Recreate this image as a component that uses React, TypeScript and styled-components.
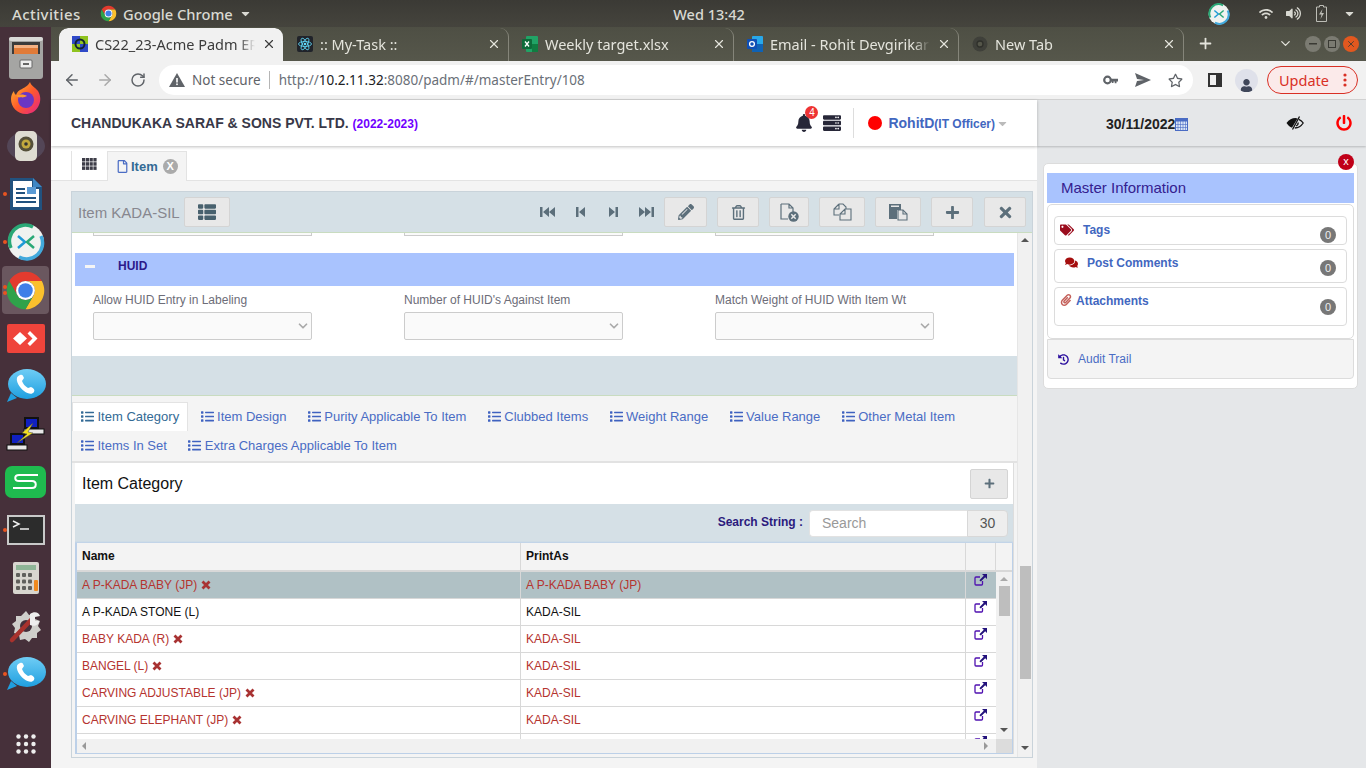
import { ReactNode } from "react";
import styled, { createGlobalStyle } from "styled-components";
import {
  FaBell,
  FaCaretDown,
  FaComments,
  FaHistory,
  FaList,
  FaPaperclip,
  FaPencilAlt,
  FaPlus,
  FaPowerOff,
  FaRegFile,
  FaRegStar,
  FaRegTrashAlt,
  FaServer,
  FaTags,
  FaThList,
  FaTimes,
  FaUser,
  FaVolumeUp,
  FaWifi,
} from "react-icons/fa";
import { ArrowLeft, ArrowRight, ChevronDown, Plus, RotateCw, X } from "lucide-react";

const GlobalStyle = createGlobalStyle`
  html, body {
    margin: 0;
    padding: 0;
    overflow: hidden;
    background: #f4f4f4;
  }
  * {
    box-sizing: border-box;
  }
`;

const uiFont = `"Liberation Sans", Arial, sans-serif`;
const desktopFont = `"Noto Sans", "Open Sans", sans-serif`;

/* ---------- drawn logos ---------- */

function ChromeLogo({ size }: { size: number }) {
  return (
    <svg width={size} height={size} viewBox="0 0 48 48">
      <path d="M43.050 13H24A11 11 0 0 0 14.470 29.500L4.950 13A22 22 0 0 1 43.050 13z" fill="#e33b2e" />
      <path d="M24 46L33.530 29.500A11 11 0 0 0 24 13H43.050A22 22 0 0 1 24 46z" fill="#fbc02d" />
      <path d="M4.950 13L14.470 29.500A11 11 0 0 0 33.530 29.500L24 46A22 22 0 0 1 4.950 13z" fill="#2fa24a" />
      <circle cx="24" cy="24" r="11" fill="#fff" />
      <circle cx="24" cy="24" r="8.500" fill="#3f7fe8" />
    </svg>
  );
}

function FileCabinet() {
  return (
    <svg width="36" height="44" viewBox="0 0 36 44">
      <rect x="1" y="1" width="34" height="42" rx="3" fill="#a5a5a3" />
      <rect x="1" y="1" width="34" height="4" rx="2" fill="#d9d9d7" />
      <rect x="4" y="6" width="28" height="12" fill="#3b3b3b" />
      <rect x="6" y="9" width="24" height="3" fill="#f4b183" />
      <rect x="6" y="12" width="24" height="6" fill="#e07b39" />
      <rect x="12" y="24" width="12" height="8" rx="1" fill="#eee" stroke="#666" />
      <rect x="15" y="27" width="6" height="2" fill="#666" />
    </svg>
  );
}

function Firefox() {
  return (
    <svg width="32" height="34" viewBox="0 0 32 34">
      <defs>
        <linearGradient id="ffx" x1="0" y1="0" x2="1" y2="1">
          <stop offset="0" stopColor="#ffc02e" />
          <stop offset="0.5" stopColor="#ff5a2b" />
          <stop offset="1" stopColor="#e3218b" />
        </linearGradient>
      </defs>
      <path d="M20 1c1 4 5 5 8 9 3 5 3 11 0 16-3 5-8 7-12 7C7 33 1 26 1 18c0-3 1-6 3-8 0 2 1 3 2 4 1-3 3-5 6-6 3-2 6-3 8-7z" fill="url(#ffx)" />
      <circle cx="16" cy="19" r="8" fill="#6b36c4" />
      <path d="M6 15c3-2 8-2 11 0-2 1-5 2-6 1-1 1-3 0-5-1z" fill="#ff9a2e" />
    </svg>
  );
}

function Speaker() {
  return (
    <svg width="40" height="36" viewBox="0 0 40 36">
      <ellipse cx="20" cy="18" rx="19" ry="14" fill="#5e5a70" opacity="0.55" />
      <rect x="9" y="3" width="22" height="30" rx="5" fill="#dedcd2" />
      <circle cx="20" cy="16" r="7.500" fill="#55503a" />
      <circle cx="20" cy="16" r="4.500" fill="#c2a93e" />
      <circle cx="20" cy="16" r="1.800" fill="#333" />
    </svg>
  );
}

function Writer() {
  return (
    <svg width="34" height="34" viewBox="0 0 34 34">
      <path d="M1 1h23l9 9v23H1z" fill="#21527f" />
      <path d="M4 4h19v8h7v18H4z" fill="#fff" />
      <path d="M24 1l9 9h-9z" fill="#3f87c4" />
      <rect x="7" y="11" width="9" height="2" fill="#21527f" />
      <rect x="7" y="15" width="9" height="2" fill="#21527f" />
      <rect x="18" y="10" width="9" height="7" fill="#5b9bd5" />
      <rect x="7" y="20" width="20" height="2" fill="#21527f" />
      <rect x="7" y="24" width="20" height="2" fill="#21527f" />
    </svg>
  );
}

function RemoteRing({ size }: { size: number }) {
  return (
    <svg width={size} height={size} viewBox="0 0 38 38">
      <circle cx="19" cy="19" r="18" fill="#f0f2f0" />
      <path d="M4 25A16 16 0 0 1 26 4" fill="none" stroke="#2aa876" strokeWidth="3.500" />
      <path d="M34 13A16 16 0 0 1 12 34" fill="none" stroke="#41a9dc" strokeWidth="3.500" />
      <path d="M11 13l7 6-7 6" fill="none" stroke="#1f9ad6" strokeWidth="2.500" />
      <path d="M27 13l-7 6 7 6" fill="none" stroke="#2aa876" strokeWidth="2.500" />
    </svg>
  );
}

function RedDesk() {
  return (
    <svg width="38" height="29" viewBox="0 0 38 29">
      <rect width="38" height="29" rx="2" fill="#ef443b" />
      <path d="M13 8l7 6.500-7 6.500-7-6.500z" fill="#fff" />
      <path d="M23 7l7.500 7.500L23 22l-2.500-2.500 5-5-5-5z" fill="#fff" />
    </svg>
  );
}

function PhoneBubble() {
  return (
    <svg width="40" height="34" viewBox="0 0 40 34">
      <defs>
        <linearGradient id="pb" x1="0" y1="0" x2="0" y2="1">
          <stop offset="0" stopColor="#6fcdf5" />
          <stop offset="1" stopColor="#1f9fe0" />
        </linearGradient>
      </defs>
      <ellipse cx="21" cy="15" rx="19" ry="15" fill="url(#pb)" />
      <path d="M5 24L1 33l10-4z" fill="#1f9fe0" />
      <path d="M14 6c2-1 3 0 4 3l-2 3c1 3 3 5 6 7l3-1c3 1 4 3 3 5-2 3-6 2-10-1-5-4-8-10-7-13 0-1 1-2 3-3z" fill="#fff" />
    </svg>
  );
}

function NetworkLink() {
  return (
    <svg width="40" height="36" viewBox="0 0 40 36">
      <rect x="18" y="1" width="15" height="12" fill="#111" />
      <rect x="20" y="3" width="11" height="8" fill="#1020c0" />
      <rect x="18" y="13" width="20" height="5" fill="#e8e8e8" stroke="#111" />
      <rect x="4" y="17" width="15" height="12" fill="#111" />
      <rect x="6" y="19" width="11" height="8" fill="#1020c0" />
      <rect x="1" y="29" width="20" height="5" fill="#e8e8e8" stroke="#111" />
      <path d="M27 7L16 17l5 1-10 9 16-10-5-1z" fill="#f5e020" stroke="#444" strokeWidth="0.500" />
    </svg>
  );
}

function WpsSheet() {
  return (
    <svg width="41" height="32" viewBox="0 0 41 32">
      <rect width="41" height="32" rx="7" fill="#1fbb4f" />
      <path d="M33 9H14c-5 0-5 6 0 6h13c5 0 5 7 0 7H8" fill="none" stroke="#fff" strokeWidth="2" />
    </svg>
  );
}

function Terminal() {
  return (
    <svg width="38" height="30" viewBox="0 0 38 30">
      <rect width="38" height="30" fill="#c9c9c9" />
      <rect x="2" y="2" width="34" height="26" fill="#2c2c2c" />
      <path d="M6 6l6 3-6 3" fill="none" stroke="#eee" strokeWidth="1.500" />
      <path d="M13 14h9" stroke="#eee" strokeWidth="1.500" />
    </svg>
  );
}

function Calculator() {
  const keys = [0, 1, 2];
  return (
    <svg width="26" height="32" viewBox="0 0 26 32">
      <rect width="26" height="32" rx="2" fill="#d8d6cf" />
      <rect x="3" y="3" width="20" height="5" fill="#8eb596" />
      {keys.map((r) =>
        keys.map((c) => <rect key={`${r}${c}`} x={3 + c * 6} y={11 + r * 6.500} width="4" height="4" rx="1" fill="#60605c" />),
      )}
      <rect x="21" y="18" width="4" height="11" rx="1" fill="#ef8a1f" />
    </svg>
  );
}

function ToolsGear() {
  return (
    <svg width="36" height="36" viewBox="0 0 36 36">
      <path d="M18 3l3 4 5-1 1 5 5 2-2 5 3 4-4 3 0 5-5 0-3 4-4-3-5 1-1-5-5-2 1-5-3-4 4-3 0-5 5 0z" fill="#cfcfcb" />
      <circle cx="18" cy="18" r="6" fill="#45303a" />
      <path d="M4 32L24 11" stroke="#a8322d" strokeWidth="4.500" strokeLinecap="round" />
      <path d="M22 6c4-3 9-2 10 2l-5 1 0 4 4 0c0 4-5 6-9 4z" fill="#eee" />
    </svg>
  );
}

function AppGrid() {
  const dots = [0, 1, 2];
  return (
    <svg width="20" height="20" viewBox="0 0 20 20">
      {dots.map((r) =>
        dots.map((c) => <circle key={`${r}${c}`} cx={2.500 + c * 7.500} cy={2.500 + r * 7.500} r="2.200" fill="#eee" />),
      )}
    </svg>
  );
}

function TabFavicon({ kind }: { kind: string }) {
  if (kind === "erp") {
    return (
      <svg width="16" height="16" viewBox="0 0 16 16">
        <rect width="16" height="16" fill="#2f49c8" />
        <path d="M8 0h8v8H8z" fill="#8fc31f" />
        <path d="M0 8h8v8H0z" fill="#8fc31f" />
        <circle cx="8" cy="8" r="4.500" fill="none" stroke="#123" strokeWidth="2" />
      </svg>
    );
  }
  if (kind === "react") {
    return (
      <svg width="16" height="16" viewBox="0 0 16 16">
        <rect width="16" height="16" rx="2" fill="#20232a" />
        <g fill="none" stroke="#61dafb" strokeWidth="0.800">
          <ellipse cx="8" cy="8" rx="6.500" ry="2.500" />
          <ellipse cx="8" cy="8" rx="6.500" ry="2.500" transform="rotate(60 8 8)" />
          <ellipse cx="8" cy="8" rx="6.500" ry="2.500" transform="rotate(120 8 8)" />
        </g>
        <circle cx="8" cy="8" r="1.300" fill="#61dafb" />
      </svg>
    );
  }
  if (kind === "excel") {
    return (
      <svg width="16" height="16" viewBox="0 0 16 16">
        <rect x="4" y="0" width="12" height="16" rx="1" fill="#21a366" />
        <rect x="10" y="8" width="6" height="8" fill="#107c41" />
        <rect x="0" y="3" width="10" height="10" rx="1" fill="#0e6b3a" />
        <path d="M3 5.500l4 5M7 5.500l-4 5" stroke="#fff" strokeWidth="1.300" />
      </svg>
    );
  }
  if (kind === "outlook") {
    return (
      <svg width="16" height="16" viewBox="0 0 16 16">
        <rect x="5" y="0" width="11" height="16" rx="1" fill="#28a8ea" />
        <rect x="5" y="8" width="11" height="8" fill="#0f62b5" />
        <rect x="0" y="3" width="10" height="10" rx="1" fill="#0f4fb5" />
        <circle cx="5" cy="8" r="2.400" fill="none" stroke="#fff" strokeWidth="1.300" />
      </svg>
    );
  }
  return (
    <svg width="16" height="16" viewBox="0 0 16 16">
      <circle cx="8" cy="8" r="7.500" fill="#3f403a" />
      <circle cx="8" cy="8" r="3" fill="#55564a" stroke="#2f302b" strokeWidth="1.300" />
    </svg>
  );
}

/* ---------- small toolbar icons ---------- */

function NavIcon({ kind }: { kind: "first" | "prev" | "next" | "last" }) {
  const paths = {
    first: "M0 1h2.500v10H0zM3 6l6-5v10zM9 6l6-5v10z",
    prev: "M0 1h2.500v10H0zM3 6l6-5v10z",
    next: "M0 1l6 5-6 5zM6.500 1H9v10H6.500z",
    last: "M0 1l6 5-6 5zM6 1l6 5-6 5zM12.500 1H15v10h-2.500z",
  };
  const wide = kind === "first" || kind === "last";
  return (
    <svg width={wide ? 15 : 9} height="12" viewBox={wide ? "0 0 15 12" : "0 0 9 12"}>
      <path d={paths[kind]} fill="#5c6f7b" />
    </svg>
  );
}

function FileCancelIcon() {
  return (
    <svg width="19" height="19" viewBox="0 0 19 19">
      <path d="M1 1h8l4 4v5M1 1v15h7M9 1v4h4" fill="none" stroke="#5c6f7b" strokeWidth="1.200" />
      <circle cx="13.500" cy="13.500" r="5.200" fill="#5c6f7b" />
      <path d="M11.300 11.300l4.400 4.400M15.700 11.300l-4.400 4.400" stroke="#e8e8e8" strokeWidth="1.500" />
    </svg>
  );
}

function CopyIcon() {
  return (
    <svg width="19" height="18" viewBox="0 0 19 18">
      <path d="M6 1h4l3 3v2M6 1L1 6v6h5M6 1v5H1" fill="none" stroke="#5c6f7b" strokeWidth="1.100" />
      <path d="M12 6h6v11H7V11zM12 6v5H7" fill="none" stroke="#5c6f7b" strokeWidth="1.100" />
    </svg>
  );
}

function PasteIcon() {
  return (
    <svg width="19" height="18" viewBox="0 0 19 18">
      <path d="M0 1h12v6H8v9H0z" fill="#5c6f7b" />
      <rect x="2" y="2.500" width="8" height="1.500" fill="#e8e8e8" />
      <path d="M9 7h5l4 4v6H9z" fill="#e8e8e8" stroke="#5c6f7b" strokeWidth="1.100" />
      <path d="M14 7v4h4" fill="none" stroke="#5c6f7b" strokeWidth="1.100" />
    </svg>
  );
}

function CalendarIcon() {
  const cols = [0, 1, 2, 3];
  return (
    <svg width="13" height="14" viewBox="0 0 13 14">
      <rect x="0.500" y="1.500" width="12" height="12" fill="#dbe6f7" stroke="#4a6cc4" />
      <rect x="0.500" y="1.500" width="12" height="3" fill="#4a6cc4" />
      {cols.map((c) => (
        <path key={c} d={`M${3 + c * 2.500} 4v9.500`} stroke="#4a6cc4" strokeWidth="0.600" />
      ))}
      <path d="M0 7.500h13M0 10.500h13" stroke="#4a6cc4" strokeWidth="0.600" />
    </svg>
  );
}

function OpenLinkIcon() {
  return (
    <svg width="13" height="12" viewBox="0 0 13 12">
      <path d="M8.500 7v3a1 1 0 0 1-1 1H2a1 1 0 0 1-1-1V4a1 1 0 0 1 1-1h4" fill="none" stroke="#4f10b0" strokeWidth="1.300" />
      <path d="M8 0h5v5l-1.800-1.800-4.400 4.400-1.400-1.400 4.400-4.400z" fill="#23127c" />
    </svg>
  );
}

function GridIcon() {
  const cols = [0, 1, 2, 3];
  const rows = [0, 1, 2];
  return (
    <svg width="15" height="12" viewBox="0 0 15 12">
      {rows.map((r) => cols.map((c) => <rect key={`${r}${c}`} x={c * 3.800} y={r * 4.200} width="3.200" height="3.500" fill="#3d3d48" />))}
    </svg>
  );
}

function RemoveMark() {
  return (
    <svg width="10" height="10" viewBox="0 0 10 10">
      <path d="M1.500 1.500l7 7M8.500 1.500l-7 7" fill="none" stroke="#a83232" strokeWidth="2.800" />
    </svg>
  );
}

function KeyIcon() {
  return (
    <svg width="15" height="10" viewBox="0 0 15 10">
      <circle cx="4.500" cy="5" r="3.300" fill="none" stroke="#5f6368" strokeWidth="2.200" />
      <path d="M8 3.800h7v2.700h-1.500v1.800h-1.800V6.500h-1.200v1.500H8.800V6.500H8z" fill="#5f6368" />
    </svg>
  );
}

function BatteryIcon() {
  return (
    <svg width="11" height="17" viewBox="0 0 11 17">
      <path d="M3.500 0.500h4v1.500h3v14.500H.500V2h3z" fill="none" stroke="#bdbdb6" />
      <path d="M6.500 4L3 9.500h2.500L4.500 14 8 8H5.500z" fill="#bdbdb6" />
    </svg>
  );
}

function KebabDots() {
  return (
    <svg width="4" height="14" viewBox="0 0 4 14">
      <circle cx="2" cy="2" r="1.600" fill="#d93025" />
      <circle cx="2" cy="7" r="1.600" fill="#d93025" />
      <circle cx="2" cy="12" r="1.600" fill="#d93025" />
    </svg>
  );
}

function HiddenEye() {
  return (
    <svg width="18" height="14" viewBox="0 0 18 14">
      <path d="M0.500 7C3 3.500 6 2 9.500 2L11.500 2.400 6 11.800C3.800 11 2 9.300 0.500 7z" fill="#111" />
      <path d="M13.500 0.500L6.500 13.500" stroke="#111" strokeWidth="1.300" />
      <path d="M12.800 3.300C14.600 4.200 16.200 5.400 17.200 7 15.200 10 12.200 11.900 8.800 12" fill="none" stroke="#111" strokeWidth="1.300" />
      <path d="M12 6.500C12.300 8 11.500 9.500 10 10" fill="none" stroke="#111" strokeWidth="1.300" />
    </svg>
  );
}

/* ---------- desktop shell ---------- */

const Screen = styled.div`
  width: 1366px;
  height: 768px;
  display: flex;
  flex-direction: column;
  overflow: hidden;
  font-family: ${uiFont};
`;

const TopBar = styled.div`
  height: 27px;
  flex: none;
  display: flex;
  align-items: center;
  background: linear-gradient(#3b3a35, #45443d);
  color: #d9d9d2;
  font-family: ${desktopFont};
  font-size: 15px;
  font-weight: 500;
`;

const Activities = styled.span`
  margin-left: 12px;
  width: 88px;
  letter-spacing: 0.400px;
`;

const AppMenu = styled.div`
  display: flex;
  align-items: center;
  gap: 6px;
  width: 573px;
  font-size: 14.700px;
`;

const Clock = styled.span`
  width: 72px;
  white-space: nowrap;
  font-size: 14.500px;
  text-align: center;
`;

const Tray = styled.div`
  margin-left: auto;
  display: flex;
  align-items: center;
  gap: 15px;
  padding-right: 10px;
`;

const TrayWifi = styled(FaWifi)`
  margin: 0 -2px 0 14px;
`;

const TrayCaret = styled(FaCaretDown)`
  margin-left: 1px;
`;

const Desktop = styled.div`
  flex: 1;
  min-height: 0;
  display: flex;
`;

const Dock = styled.div`
  width: 51px;
  flex: none;
  display: flex;
  flex-direction: column;
  padding-top: 11px;
  background: #46303a;
`;

const DockSlot = styled.div<{ $h?: number; $active?: boolean; $end?: boolean; $mb?: number }>`
  position: relative;
  flex: none;
  height: ${(p) => p.$h ?? 48}px;
  margin: ${(p) => (p.$end ? "auto" : "0")} 2px ${(p) => p.$mb ?? 0}px;
  display: flex;
  align-items: center;
  justify-content: center;
  border-radius: 4px;
  background: ${(p) => (p.$active ? "#6a575f" : "transparent")};
`;

const DockDots = styled.span`
  position: absolute;
  left: 0;
  top: 50%;
  transform: translateY(-50%);
  display: flex;
  flex-direction: column;
  gap: 2px;
`;

const DockDot = styled.i`
  display: block;
  width: 4px;
  height: 4px;
  margin-left: 1px;
  border-radius: 50%;
  background: #e95420;
`;

const Browser = styled.div`
  flex: 1;
  min-width: 0;
  display: flex;
  flex-direction: column;
`;

const TabStrip = styled.div`
  height: 34px;
  flex: none;
  display: flex;
  align-items: flex-end;
  padding-left: 8px;
  background: linear-gradient(#4e4f44, #56574b);
  color: #e4e4dc;
  font-family: ${desktopFont};
  font-size: 14.500px;
`;

const BrowserTab = styled.div<{ $active?: boolean; $sep?: boolean }>`
  width: 225px;
  height: 33px;
  flex: none;
  display: flex;
  align-items: center;
  gap: 7px;
  padding: 0 7px 2px 13px;
  border-radius: 9px 9px 0 0;
  background: ${(p) => (p.$active ? "#f1f1f1" : "transparent")};
  color: ${(p) => (p.$active ? "#3c3c3c" : "#e4e4dc")};
  border-right: 1px solid ${(p) => (p.$sep ? "#85857a" : "transparent")};
  background-clip: padding-box;
`;

const TabTitle = styled.span`
  flex: 1;
  min-width: 0;
  white-space: nowrap;
  -webkit-mask-image: linear-gradient(to right, #000 90%, transparent 100%);
  mask-image: linear-gradient(to right, #000 90%, transparent 100%);
`;

const StripEnd = styled.div`
  flex: 1;
  height: 33px;
  display: flex;
  align-items: center;
  padding: 0 0 2px 13px;
`;

const WindowButtons = styled.div`
  margin-left: auto;
  display: flex;
  align-items: center;
  gap: 3px;
  padding-right: 7px;
`;

const StripChevron = styled(ChevronDown)`
  margin-right: 9px;
`;

const WindowButton = styled.span<{ $close?: boolean }>`
  width: 16px;
  height: 16px;
  border-radius: 50%;
  display: flex;
  align-items: center;
  justify-content: center;
  background: ${(p) => (p.$close ? "#e2581f" : "#7b7b72")};
  color: #3a3a34;
`;

const UrlBar = styled.div`
  height: 39px;
  flex: none;
  display: flex;
  align-items: center;
  background: #f1f1f1;
  border-bottom: 1px solid #d4d4d4;
  color: #5f6368;
`;

const NavButton = styled.span<{ $w: number }>`
  width: ${(p) => p.$w}px;
  flex: none;
  display: flex;
  align-items: center;
  justify-content: center;
`;

const Omnibox = styled.div`
  width: 1034px;
  height: 30px;
  flex: none;
  display: flex;
  align-items: center;
  padding-left: 10px;
  border-radius: 15px;
  background: #fff;
  font-family: ${desktopFont};
  font-size: 13.500px;
`;

const SecurityText = styled.span`
  margin-left: 7px;
  color: #5f6368;
  white-space: nowrap;
  padding-right: 8px;
  border-right: 1px solid #b5b5b5;
  line-height: 18px;
`;

const UrlText = styled.span`
  margin-left: 9px;
  color: #6a7078;
  white-space: nowrap;
  b {
    font-weight: 400;
    color: #202124;
  }
`;

const OmniIcons = styled.div`
  margin-left: auto;
  display: flex;
  align-items: center;
  gap: 17px;
  padding-right: 10px;
  color: #5f6368;
`;

const AvatarCircle = styled.span`
  width: 23px;
  height: 23px;
  flex: none;
  border-radius: 50%;
  background: #dfe1ea;
  display: flex;
  align-items: flex-end;
  justify-content: center;
  overflow: hidden;
  color: #40475a;
`;

const SideToggle = styled.span`
  display: block;
  width: 14px;
  height: 14px;
  margin: 0 13px 0 15px;
  border: 2px solid #333;
  border-right-width: 6px;
`;

const UpdatePill = styled.span`
  width: 91px;
  height: 28px;
  flex: none;
  margin-left: 9px;
  display: flex;
  align-items: center;
  padding-left: 11px;
  border: 1px solid #d93025;
  border-radius: 14px;
  background: #fbeaea;
  color: #d93025;
  font-family: ${desktopFont};
  font-size: 14.500px;
`;

const KebabSlot = styled.span`
  margin-left: auto;
  margin-right: 10px;
  display: flex;
`;

/* ---------- erp page ---------- */

const Page = styled.div`
  flex: 1;
  min-height: 0;
  display: flex;
`;

const MainColumn = styled.div`
  width: 986px;
  flex: none;
  display: flex;
  flex-direction: column;
  background: #f4f4f4;
`;

const PageHeader = styled.header`
  height: 46px;
  flex: none;
  display: flex;
  align-items: center;
  padding: 0 28px 0 20px;
  background: #fff;
  box-shadow: 0 1px 3px rgba(0, 0, 0, 0.25);
  position: relative;
`;

const CompanyName = styled.h1`
  margin: 0;
  font-size: 14px;
  font-weight: 700;
  color: #383848;
  white-space: nowrap;
`;

const YearTag = styled.span`
  font-size: 12px;
  color: #7000ff;
`;

const HeaderTools = styled.div`
  margin-left: auto;
  display: flex;
  align-items: center;
  color: #272738;
`;

const BellWrap = styled.span`
  position: relative;
  display: flex;
  margin-right: 10px;
`;

const BellBadge = styled.span`
  position: absolute;
  top: -8px;
  right: -5px;
  width: 13px;
  height: 13px;
  border-radius: 50%;
  background: #ee3333;
  color: #fff;
  font-size: 10px;
  line-height: 13px;
  text-align: center;
`;

const ToolDivider = styled.span`
  width: 1px;
  height: 30px;
  margin: 0 14px 0 12px;
  background: #ddd;
`;

const StatusDot = styled.span`
  width: 14px;
  height: 14px;
  margin-right: 6px;
  border-radius: 50%;
  background: #ff0000;
`;

const UserName = styled.span`
  display: flex;
  align-items: baseline;
  font-size: 14px;
  font-weight: 700;
  color: #4267c0;
  small {
    font-size: 12px;
  }
`;

const UserCaret = styled(FaCaretDown)`
  margin-left: 1px;
  color: #bbb;
`;

const PageTabs = styled.div`
  height: 35px;
  flex: none;
  display: flex;
  align-items: flex-end;
  padding-left: 20px;
  background: #fff;
  border-bottom: 1px solid #e3e3e3;
`;

const GridTab = styled.div`
  width: 36px;
  height: 29px;
  display: flex;
  justify-content: center;
  padding-top: 7px;
  border-left: 1px solid #e3e3e3;
`;

const DocTab = styled.div`
  height: 30px;
  width: 80px;
  display: flex;
  align-items: center;
  gap: 2px;
  padding-left: 8px;
  margin-bottom: -1px;
  background: #f4f4f4;
  border: 1px solid #e3e3e3;
  border-bottom: none;
  color: #336a95;
  font-size: 13px;
  font-weight: 700;
`;

const TabCloseCircle = styled.span`
  width: 15px;
  height: 15px;
  margin-left: 3px;
  border-radius: 50%;
  background: #aaa;
  color: #fff;
  font-size: 11px;
  line-height: 15px;
  text-align: center;
`;

const WorkArea = styled.div`
  flex: 1;
  min-height: 0;
  display: flex;
  padding: 10px 4px 10px 20px;
`;

const Panel = styled.section`
  flex: 1;
  min-width: 0;
  display: flex;
  flex-direction: column;
  border: 1px solid #c9d3da;
`;

const PanelHead = styled.div`
  height: 41px;
  flex: none;
  display: flex;
  align-items: center;
  padding: 0 6px 0 6px;
  background: #d5e0e6;
  border-bottom: 1px solid #c9dcc0;
`;

const PanelTitle = styled.span`
  font-size: 15px;
  color: #87878f;
  margin-right: 4px;
`;

const ActionButton = styled.span<{ $w: number; $ml?: number }>`
  width: ${(p) => p.$w}px;
  height: 30px;
  flex: none;
  margin-left: ${(p) => p.$ml ?? 10}px;
  display: flex;
  align-items: center;
  justify-content: center;
  background: #e8e8e8;
  border: 1px solid #d4d4d4;
  border-radius: 2px;
  color: #5c6f7b;
`;

const NavGroup = styled.div`
  margin-left: auto;
  display: flex;
  align-items: center;
  margin-right: 1px;
`;

const NavSlot = styled.span<{ $w: number }>`
  width: ${(p) => p.$w}px;
  display: flex;
  justify-content: center;
`;

const PanelBody = styled.div`
  flex: 1;
  min-height: 0;
  display: flex;
`;

const Scroller = styled.div`
  flex: 1;
  min-width: 0;
  display: flex;
  flex-direction: column;
  background: #f4f4f4;
`;

const PageScrollbar = styled.div`
  width: 15px;
  flex: none;
  display: flex;
  flex-direction: column;
  align-items: center;
  background: #f1f1f1;
  border-left: 1px solid #e6e6e6;
`;

const ArrowUp = styled.span<{ $c?: string }>`
  display: block;
  width: 0;
  height: 0;
  margin-top: 5px;
  border-left: 4px solid transparent;
  border-right: 4px solid transparent;
  border-bottom: 4px solid ${(p) => p.$c ?? "#555"};
`;

const ArrowDown = styled.span`
  display: block;
  width: 0;
  height: 0;
  margin-top: auto;
  margin-bottom: 7px;
  border-left: 4px solid transparent;
  border-right: 4px solid transparent;
  border-top: 4px solid #555;
`;

const PageThumb = styled.span`
  display: block;
  width: 11px;
  height: 113px;
  margin-top: 324px;
  background: #bebebe;
`;

const WhiteBlock = styled.div`
  height: 123px;
  flex: none;
  background: #fff;
`;

const CutInputs = styled.div`
  height: 20px;
  display: grid;
  grid-template-columns: repeat(3, 219px);
  column-gap: 92px;
  padding-left: 21px;
`;

const CutInput = styled.span`
  display: block;
  height: 3px;
  border: 1px solid #ccc;
  border-top: none;
  background: #fafafa;
`;

const SectionBar = styled.div`
  height: 33px;
  margin: 0 3px;
  display: flex;
  align-items: center;
  padding-bottom: 8px;
  background: #a9c3fe;
  color: #2d1a8a;
  font-size: 12px;
  font-weight: 700;
`;

const CollapseDash = styled.span`
  width: 10px;
  height: 3px;
  margin: 1px 23px 0 10px;
  background: #f5f5f5;
`;

const FieldRow = styled.div`
  display: grid;
  grid-template-columns: repeat(3, 219px);
  column-gap: 92px;
  padding: 7px 0 0 21px;
`;

const Field = styled.label`
  display: flex;
  flex-direction: column;
  gap: 5px;
  font-size: 12px;
  color: #6d6d78;
`;

const SelectBox = styled.span`
  height: 28px;
  display: flex;
  align-items: center;
  justify-content: flex-end;
  padding-right: 1px;
  background: #fafafa;
  border: 1px solid #ccc;
  border-radius: 2px;
  color: #aaa;
`;

const GreyBand = styled.div`
  height: 40px;
  flex: none;
  background: #d5e0e6;
  border-bottom: 1px solid #c9dcc0;
`;

const ChildTabs = styled.div`
  flex: none;
  display: flex;
  flex-wrap: wrap;
  column-gap: 5.400px;
  padding: 6px 0 1px 1px;
  border-bottom: 2px solid #e2e2e2;
`;

const ChildTab = styled.div<{ $active?: boolean }>`
  height: 29px;
  display: flex;
  align-items: center;
  gap: 3.500px;
  padding: 0 8px 2px;
  color: ${(p) => (p.$active ? "#336a95" : "#4a6cc4")};
  font-size: 13px;
  background: ${(p) => (p.$active ? "#fff" : "transparent")};
  border: 1px solid ${(p) => (p.$active ? "#e3e3e3" : "transparent")};
  border-bottom: none;
  margin: 0 -1px;
`;

const GridCard = styled.div`
  flex: 1;
  min-height: 0;
  margin: 0 3px 3px;
  display: flex;
  flex-direction: column;
  border-right: 1px solid #ddd;
`;

const CardHead = styled.div`
  height: 41px;
  flex: none;
  display: flex;
  align-items: center;
  justify-content: space-between;
  padding: 0 5px 0 7px;
  background: #fff;
  font-size: 16px;
  color: #111;
`;

const CardTitle = styled.span`
  margin-top: 1px;
`;

const SearchRow = styled.div`
  height: 39px;
  flex: none;
  display: flex;
  align-items: center;
  justify-content: flex-end;
  padding: 0 5px 1px 0;
  background: #d5e0e6;
  box-shadow: inset 0 -2px 2px -1px #bcd0e8;
`;

const SearchLabel = styled.span`
  margin: 0 6px 3px 0;
  font-size: 12px;
  font-weight: 700;
  color: #2b1a7d;
`;

const SearchInput = styled.input`
  width: 158px;
  height: 27px;
  padding: 0 12px;
  border: 1px solid #e2e2e2;
  border-right: none;
  border-radius: 4px 0 0 4px;
  background: #fff;
  font: 14px ${uiFont};
  &::placeholder {
    color: #999;
    opacity: 1;
  }
`;

const SearchCount = styled.span`
  width: 41px;
  height: 27px;
  display: flex;
  align-items: center;
  justify-content: center;
  border: 1px solid #d8d8d8;
  border-radius: 0 4px 4px 0;
  background: #eee;
  font-size: 14px;
  color: #555;
`;

const DataTable = styled.div`
  flex: 1;
  min-height: 0;
  display: flex;
  flex-direction: column;
  border: 1px solid #bcd0e8;
  border-top: none;
  border-left-width: 2px;
`;

const HeadRow = styled.div`
  height: 29px;
  flex: none;
  display: grid;
  grid-template-columns: 444px 445px 30px 1fr;
  background: #f3f3f3;
  border-bottom: 2px solid #d8d8d8;
  font-size: 12px;
  font-weight: 700;
  color: #111;
`;

const HeadCell = styled.div`
  display: flex;
  align-items: center;
  padding: 0 0 2px 5px;
  border-right: 1px solid #d8d8d8;
  &:last-child {
    border-right: none;
  }
`;

const TableMiddle = styled.div`
  flex: 1;
  min-height: 0;
  display: flex;
`;

const RowsClip = styled.div`
  width: 919px;
  flex: none;
  overflow: hidden;
`;

const DataRow = styled.div<{ $selected?: boolean; $red?: boolean }>`
  height: 27px;
  display: grid;
  grid-template-columns: 444px 445px 30px;
  border-bottom: 1px solid #d8d8d8;
  background: ${(p) => (p.$selected ? "#b0c1c5" : "#fff")};
  color: ${(p) => (p.$red ? "#b5342f" : "#111")};
  font-size: 12px;
`;

const DataCell = styled.div`
  display: flex;
  align-items: center;
  gap: 4px;
  padding-left: 5px;
  border-right: 1px solid #d8d8d8;
`;

const LinkCell = styled.div`
  display: flex;
  padding: 2px 0 0 8px;
`;

const TableVBar = styled.div`
  flex: 1;
  display: flex;
  flex-direction: column;
  align-items: center;
  background: #f1f1f1;
`;

const TableThumb = styled.span`
  display: block;
  width: 11px;
  height: 30px;
  margin-top: 5px;
  background: #bebebe;
`;

const TableHBar = styled.div`
  height: 14px;
  flex: none;
  display: flex;
  align-items: center;
  justify-content: space-between;
  padding-left: 5px;
  background: #f1f1f1;
`;

const ArrowLeftTip = styled.span`
  border-top: 4px solid transparent;
  border-bottom: 4px solid transparent;
  border-right: 4px solid #999;
`;

const HBarEnd = styled.div`
  display: flex;
  align-items: center;
  gap: 8px;
`;

const ArrowRightTip = styled.span`
  border-top: 4px solid transparent;
  border-bottom: 4px solid transparent;
  border-left: 4px solid #999;
`;

const HBarCorner = styled.span`
  display: block;
  width: 16px;
  height: 14px;
  background: #dcdcdc;
`;

/* ---------- right column ---------- */

const SideColumn = styled.aside`
  flex: 1;
  min-width: 0;
  display: flex;
  flex-direction: column;
  background: #e5e7e9;
`;

const SideHeader = styled.div`
  height: 46px;
  flex: none;
  display: flex;
  align-items: center;
  padding: 2px 14px 0 69px;
  box-shadow: 0 1px 2px rgba(0, 0, 0, 0.2);
  font-size: 14px;
  font-weight: 700;
  color: #222;
`;

const SideIcons = styled.div`
  margin-left: auto;
  display: flex;
  align-items: center;
  gap: 32px;
  margin-top: -3px;
`;

const InfoCard = styled.div`
  position: relative;
  margin: 17px 8px 0 6px;
  padding: 9px 3px 9px;
  background: #fff;
  border: 1px solid #dcdcdc;
  border-radius: 5px;
`;

const CardClose = styled.span`
  position: absolute;
  top: -10px;
  right: 3px;
  width: 16px;
  height: 16px;
  border-radius: 50%;
  background: #c00018;
  color: #fff;
  font-size: 11px;
  line-height: 15px;
  text-align: center;
`;

const InfoTitle = styled.div`
  height: 30px;
  display: flex;
  align-items: center;
  padding: 0 0 2px 14px;
  background: #a9c3fe;
  color: #34208f;
  font-size: 15px;
`;

const InfoList = styled.div`
  margin-top: 1px;
  padding: 11px 6px;
  height: 135px;
  display: flex;
  flex-direction: column;
  gap: 4px;
  border: 1px solid #dcdcdc;
  border-radius: 5px;
`;

const InfoItem = styled.div<{ $h: number; $pl: number; $gap: number }>`
  position: relative;
  height: ${(p) => p.$h}px;
  flex: none;
  display: flex;
  align-items: flex-start;
  gap: ${(p) => p.$gap}px;
  padding: 6px 0 0 ${(p) => p.$pl}px;
  border: 1px solid #dcdcdc;
  border-radius: 4px;
  color: #4267c0;
  font-size: 12px;
  font-weight: 700;
`;

const CountBadge = styled.span<{ $top: number }>`
  position: absolute;
  right: 10px;
  top: ${(p) => p.$top}px;
  width: 16px;
  height: 16px;
  border-radius: 50%;
  background: #777;
  color: #eee;
  font-size: 11px;
  font-weight: 400;
  line-height: 16px;
  text-align: center;
`;

const AuditBar = styled.div`
  height: 40px;
  display: flex;
  align-items: center;
  gap: 9px;
  padding-left: 10px;
  background: #f4f4f4;
  border: 1px solid #dcdcdc;
  border-radius: 0 0 4px 4px;
  color: #4a6cc4;
  font-size: 12px;
`;

/* ---------- data ---------- */

const dockApps: { icon: ReactNode; h?: number; mb?: number; dots?: number; active?: boolean }[] = [
  { icon: <FileCabinet />, h: 40 },
  { icon: <Firefox />, h: 40, mb: 4 },
  { icon: <Speaker /> },
  { icon: <Writer />, dots: 1 },
  { icon: <RemoteRing size={38} />, dots: 1 },
  { icon: <ChromeLogo size={41} />, dots: 2, active: true },
  { icon: <RedDesk /> },
  { icon: <PhoneBubble /> },
  { icon: <NetworkLink /> },
  { icon: <WpsSheet /> },
  { icon: <Terminal />, dots: 1 },
  { icon: <Calculator /> },
  { icon: <ToolsGear /> },
  { icon: <PhoneBubble />, dots: 1 },
];

const browserTabs = [
  { kind: "erp", title: "CS22_23-Acme Padm ER", active: true },
  { kind: "react", title: ":: My-Task ::", sep: true },
  { kind: "excel", title: "Weekly target.xlsx", sep: true },
  { kind: "outlook", title: "Email - Rohit Devgirikar", sep: true },
  { kind: "new", title: "New Tab", sep: true },
];

const huidFields = ["Allow HUID Entry in Labeling", "Number of HUID's Against Item", "Match Weight of HUID With Item Wt"];

const childTabs = [
  "Item Category",
  "Item Design",
  "Purity Applicable To Item",
  "Clubbed Items",
  "Weight Range",
  "Value Range",
  "Other Metal Item",
  "Items In Set",
  "Extra Charges Applicable To Item",
];

const categoryRows = [
  { name: "A P-KADA BABY (JP)", printAs: "A P-KADA BABY (JP)", red: true, selected: true },
  { name: "A P-KADA STONE (L)", printAs: "KADA-SIL" },
  { name: "BABY KADA (R)", printAs: "KADA-SIL", red: true },
  { name: "BANGEL (L)", printAs: "KADA-SIL", red: true },
  { name: "CARVING ADJUSTABLE (JP)", printAs: "KADA-SIL", red: true },
  { name: "CARVING ELEPHANT (JP)", printAs: "KADA-SIL", red: true },
  { name: "", printAs: "" },
];

export default function App() {
  return (
    <>
      <GlobalStyle />
      <Screen>
        <TopBar>
          <Activities>Activities</Activities>
          <AppMenu>
            <ChromeLogo size={17} />
            Google Chrome
            <FaCaretDown size={13} />
          </AppMenu>
          <Clock>Wed 13:42</Clock>
          <Tray>
            <RemoteRing size={22} />
            <TrayWifi size={14} />
            <FaVolumeUp size={15} />
            <BatteryIcon />
            <TrayCaret size={13} />
          </Tray>
        </TopBar>
        <Desktop>
          <Dock>
            {dockApps.map((app, i) => (
              <DockSlot key={i} $h={app.h} $mb={app.mb} $active={app.active}>
                {app.dots ? (
                  <DockDots>
                    {Array.from({ length: app.dots }).map((_, d) => (
                      <DockDot key={d} />
                    ))}
                  </DockDots>
                ) : null}
                {app.icon}
              </DockSlot>
            ))}
            <DockSlot $end>
              <AppGrid />
            </DockSlot>
          </Dock>
          <Browser>
            <TabStrip>
              {browserTabs.map((tab) => (
                <BrowserTab key={tab.title} $active={tab.active} $sep={tab.sep}>
                  <TabFavicon kind={tab.kind} />
                  <TabTitle>{tab.title}</TabTitle>
                  <X size={14} strokeWidth={2} />
                </BrowserTab>
              ))}
              <StripEnd>
                <Plus size={17} strokeWidth={2.5} />
                <WindowButtons>
                  <StripChevron size={15} />
                  <WindowButton>
                    <svg width="8" height="2" viewBox="0 0 8 2">
                      <rect width="8" height="1.500" fill="#3a3a34" />
                    </svg>
                  </WindowButton>
                  <WindowButton>
                    <svg width="8" height="8" viewBox="0 0 8 8">
                      <rect x="0.500" y="0.500" width="7" height="7" fill="none" stroke="#3a3a34" />
                    </svg>
                  </WindowButton>
                  <WindowButton $close>
                    <X size={10} />
                  </WindowButton>
                </WindowButtons>
              </StripEnd>
            </TabStrip>
            <UrlBar>
              <NavButton $w={42}>
                <ArrowLeft size={18} strokeWidth={2} />
              </NavButton>
              <NavButton $w={24}>
                <ArrowRight size={18} strokeWidth={2} color="#a9a9a9" />
              </NavButton>
              <NavButton $w={42}>
                <RotateCw size={16} strokeWidth={2.2} />
              </NavButton>
              <Omnibox>
                <svg width="16" height="14" viewBox="0 0 16 14">
                  <path d="M8 0l8 14H0z" fill="#5f6368" />
                  <rect x="7.200" y="5" width="1.600" height="4.500" fill="#fff" />
                  <rect x="7.200" y="10.500" width="1.600" height="1.600" fill="#fff" />
                </svg>
                <SecurityText>Not secure</SecurityText>
                <UrlText>
                  http://<b>10.2.11.32</b>:8080/padm/#/masterEntry/108
                </UrlText>
                <OmniIcons>
                  <KeyIcon />
                  <svg width="16" height="14" viewBox="0 0 16 14">
                    <path d="M0 0l16 7-16 7 2-6 7-1-7-1z" fill="#5f6368" />
                  </svg>
                  <FaRegStar size={15} />
                </OmniIcons>
              </Omnibox>
              <SideToggle />
              <AvatarCircle>
                <FaUser size={13} />
              </AvatarCircle>
              <UpdatePill>
                Update
                <KebabSlot>
                  <KebabDots />
                </KebabSlot>
              </UpdatePill>
            </UrlBar>
            <Page>
              <MainColumn>
                <PageHeader>
                  <CompanyName>
                    CHANDUKAKA SARAF &amp; SONS PVT. LTD. <YearTag>(2022-2023)</YearTag>
                  </CompanyName>
                  <HeaderTools>
                    <BellWrap>
                      <FaBell size={18} />
                      <BellBadge>4</BellBadge>
                    </BellWrap>
                    <FaServer size={18} />
                    <ToolDivider />
                    <StatusDot />
                    <UserName>
                      RohitD<small>(IT Officer)</small>
                    </UserName>
                    <UserCaret size={13} />
                  </HeaderTools>
                </PageHeader>
                <PageTabs>
                  <GridTab>
                    <GridIcon />
                  </GridTab>
                  <DocTab>
                    <FaRegFile size={13} color="#4a6cc4" />
                    Item
                    <TabCloseCircle>X</TabCloseCircle>
                  </DocTab>
                </PageTabs>
                <WorkArea>
                  <Panel>
                    <PanelHead>
                      <PanelTitle>Item KADA-SIL</PanelTitle>
                      <ActionButton $w={46} $ml={0}>
                        <FaThList size={18} color="#48616e" />
                      </ActionButton>
                      <NavGroup>
                        <NavSlot $w={34}>
                          <NavIcon kind="first" />
                        </NavSlot>
                        <NavSlot $w={33}>
                          <NavIcon kind="prev" />
                        </NavSlot>
                        <NavSlot $w={32}>
                          <NavIcon kind="next" />
                        </NavSlot>
                        <NavSlot $w={34}>
                          <NavIcon kind="last" />
                        </NavSlot>
                      </NavGroup>
                      <ActionButton $w={43} $ml={0}>
                        <FaPencilAlt size={16} />
                      </ActionButton>
                      <ActionButton $w={42}>
                        <FaRegTrashAlt size={15} />
                      </ActionButton>
                      <ActionButton $w={40}>
                        <FileCancelIcon />
                      </ActionButton>
                      <ActionButton $w={46}>
                        <CopyIcon />
                      </ActionButton>
                      <ActionButton $w={46}>
                        <PasteIcon />
                      </ActionButton>
                      <ActionButton $w={42}>
                        <FaPlus size={15} />
                      </ActionButton>
                      <ActionButton $w={42} $ml={11}>
                        <FaTimes size={17} />
                      </ActionButton>
                    </PanelHead>
                    <PanelBody>
                      <Scroller>
                        <WhiteBlock>
                          <CutInputs>
                            <CutInput />
                            <CutInput />
                            <CutInput />
                          </CutInputs>
                          <SectionBar>
                            <CollapseDash />
                            HUID
                          </SectionBar>
                          <FieldRow>
                            {huidFields.map((label) => (
                              <Field key={label}>
                                {label}
                                <SelectBox>
                                  <ChevronDown size={14} strokeWidth={3} />
                                </SelectBox>
                              </Field>
                            ))}
                          </FieldRow>
                        </WhiteBlock>
                        <GreyBand />
                        <ChildTabs>
                          {childTabs.map((tab, i) => (
                            <ChildTab key={tab} $active={i === 0}>
                              <FaList size={13} color={i === 0 ? "#336a95" : "#3f62c0"} />
                              {tab}
                            </ChildTab>
                          ))}
                        </ChildTabs>
                        <GridCard>
                          <CardHead>
                            <CardTitle>Item Category</CardTitle>
                            <ActionButton $w={38} $ml={0}>
                              <FaPlus size={11} />
                            </ActionButton>
                          </CardHead>
                          <SearchRow>
                            <SearchLabel>Search String :</SearchLabel>
                            <SearchInput placeholder="Search" readOnly />
                            <SearchCount>30</SearchCount>
                          </SearchRow>
                          <DataTable>
                            <HeadRow>
                              <HeadCell>Name</HeadCell>
                              <HeadCell>PrintAs</HeadCell>
                              <HeadCell />
                              <HeadCell />
                            </HeadRow>
                            <TableMiddle>
                              <RowsClip>
                                {categoryRows.map((row, i) => (
                                  <DataRow key={i} $selected={row.selected} $red={row.red}>
                                    <DataCell>
                                      {row.name}
                                      {row.red ? <RemoveMark /> : null}
                                    </DataCell>
                                    <DataCell>{row.printAs}</DataCell>
                                    <LinkCell>
                                      <OpenLinkIcon />
                                    </LinkCell>
                                  </DataRow>
                                ))}
                              </RowsClip>
                              <TableVBar>
                                <ArrowUp $c="#aaa" />
                                <TableThumb />
                                <ArrowDown />
                              </TableVBar>
                            </TableMiddle>
                            <TableHBar>
                              <ArrowLeftTip />
                              <HBarEnd>
                                <ArrowRightTip />
                                <HBarCorner />
                              </HBarEnd>
                            </TableHBar>
                          </DataTable>
                        </GridCard>
                      </Scroller>
                      <PageScrollbar>
                        <ArrowUp />
                        <PageThumb />
                        <ArrowDown />
                      </PageScrollbar>
                    </PanelBody>
                  </Panel>
                </WorkArea>
              </MainColumn>
              <SideColumn>
                <SideHeader>
                  30/11/2022
                  <CalendarIcon />
                  <SideIcons>
                    <HiddenEye />
                    <FaPowerOff size={16} color="#ff0000" />
                  </SideIcons>
                </SideHeader>
                <InfoCard>
                  <CardClose>x</CardClose>
                  <InfoTitle>Master Information</InfoTitle>
                  <InfoList>
                    <InfoItem $h={29} $pl={5} $gap={9}>
                      <FaTags size={14} color="#9b0d1e" />
                      Tags
                      <CountBadge $top={10}>0</CountBadge>
                    </InfoItem>
                    <InfoItem $h={34} $pl={10} $gap={9}>
                      <FaComments size={13} color="#a50e0e" />
                      Post Comments
                      <CountBadge $top={10}>0</CountBadge>
                    </InfoItem>
                    <InfoItem $h={39} $pl={5} $gap={4}>
                      <FaPaperclip size={12} color="#c4605a" />
                      Attachments
                      <CountBadge $top={11}>0</CountBadge>
                    </InfoItem>
                  </InfoList>
                  <AuditBar>
                    <FaHistory size={11} color="#2b0f9e" />
                    Audit Trail
                  </AuditBar>
                </InfoCard>
              </SideColumn>
            </Page>
          </Browser>
        </Desktop>
      </Screen>
    </>
  );
}
